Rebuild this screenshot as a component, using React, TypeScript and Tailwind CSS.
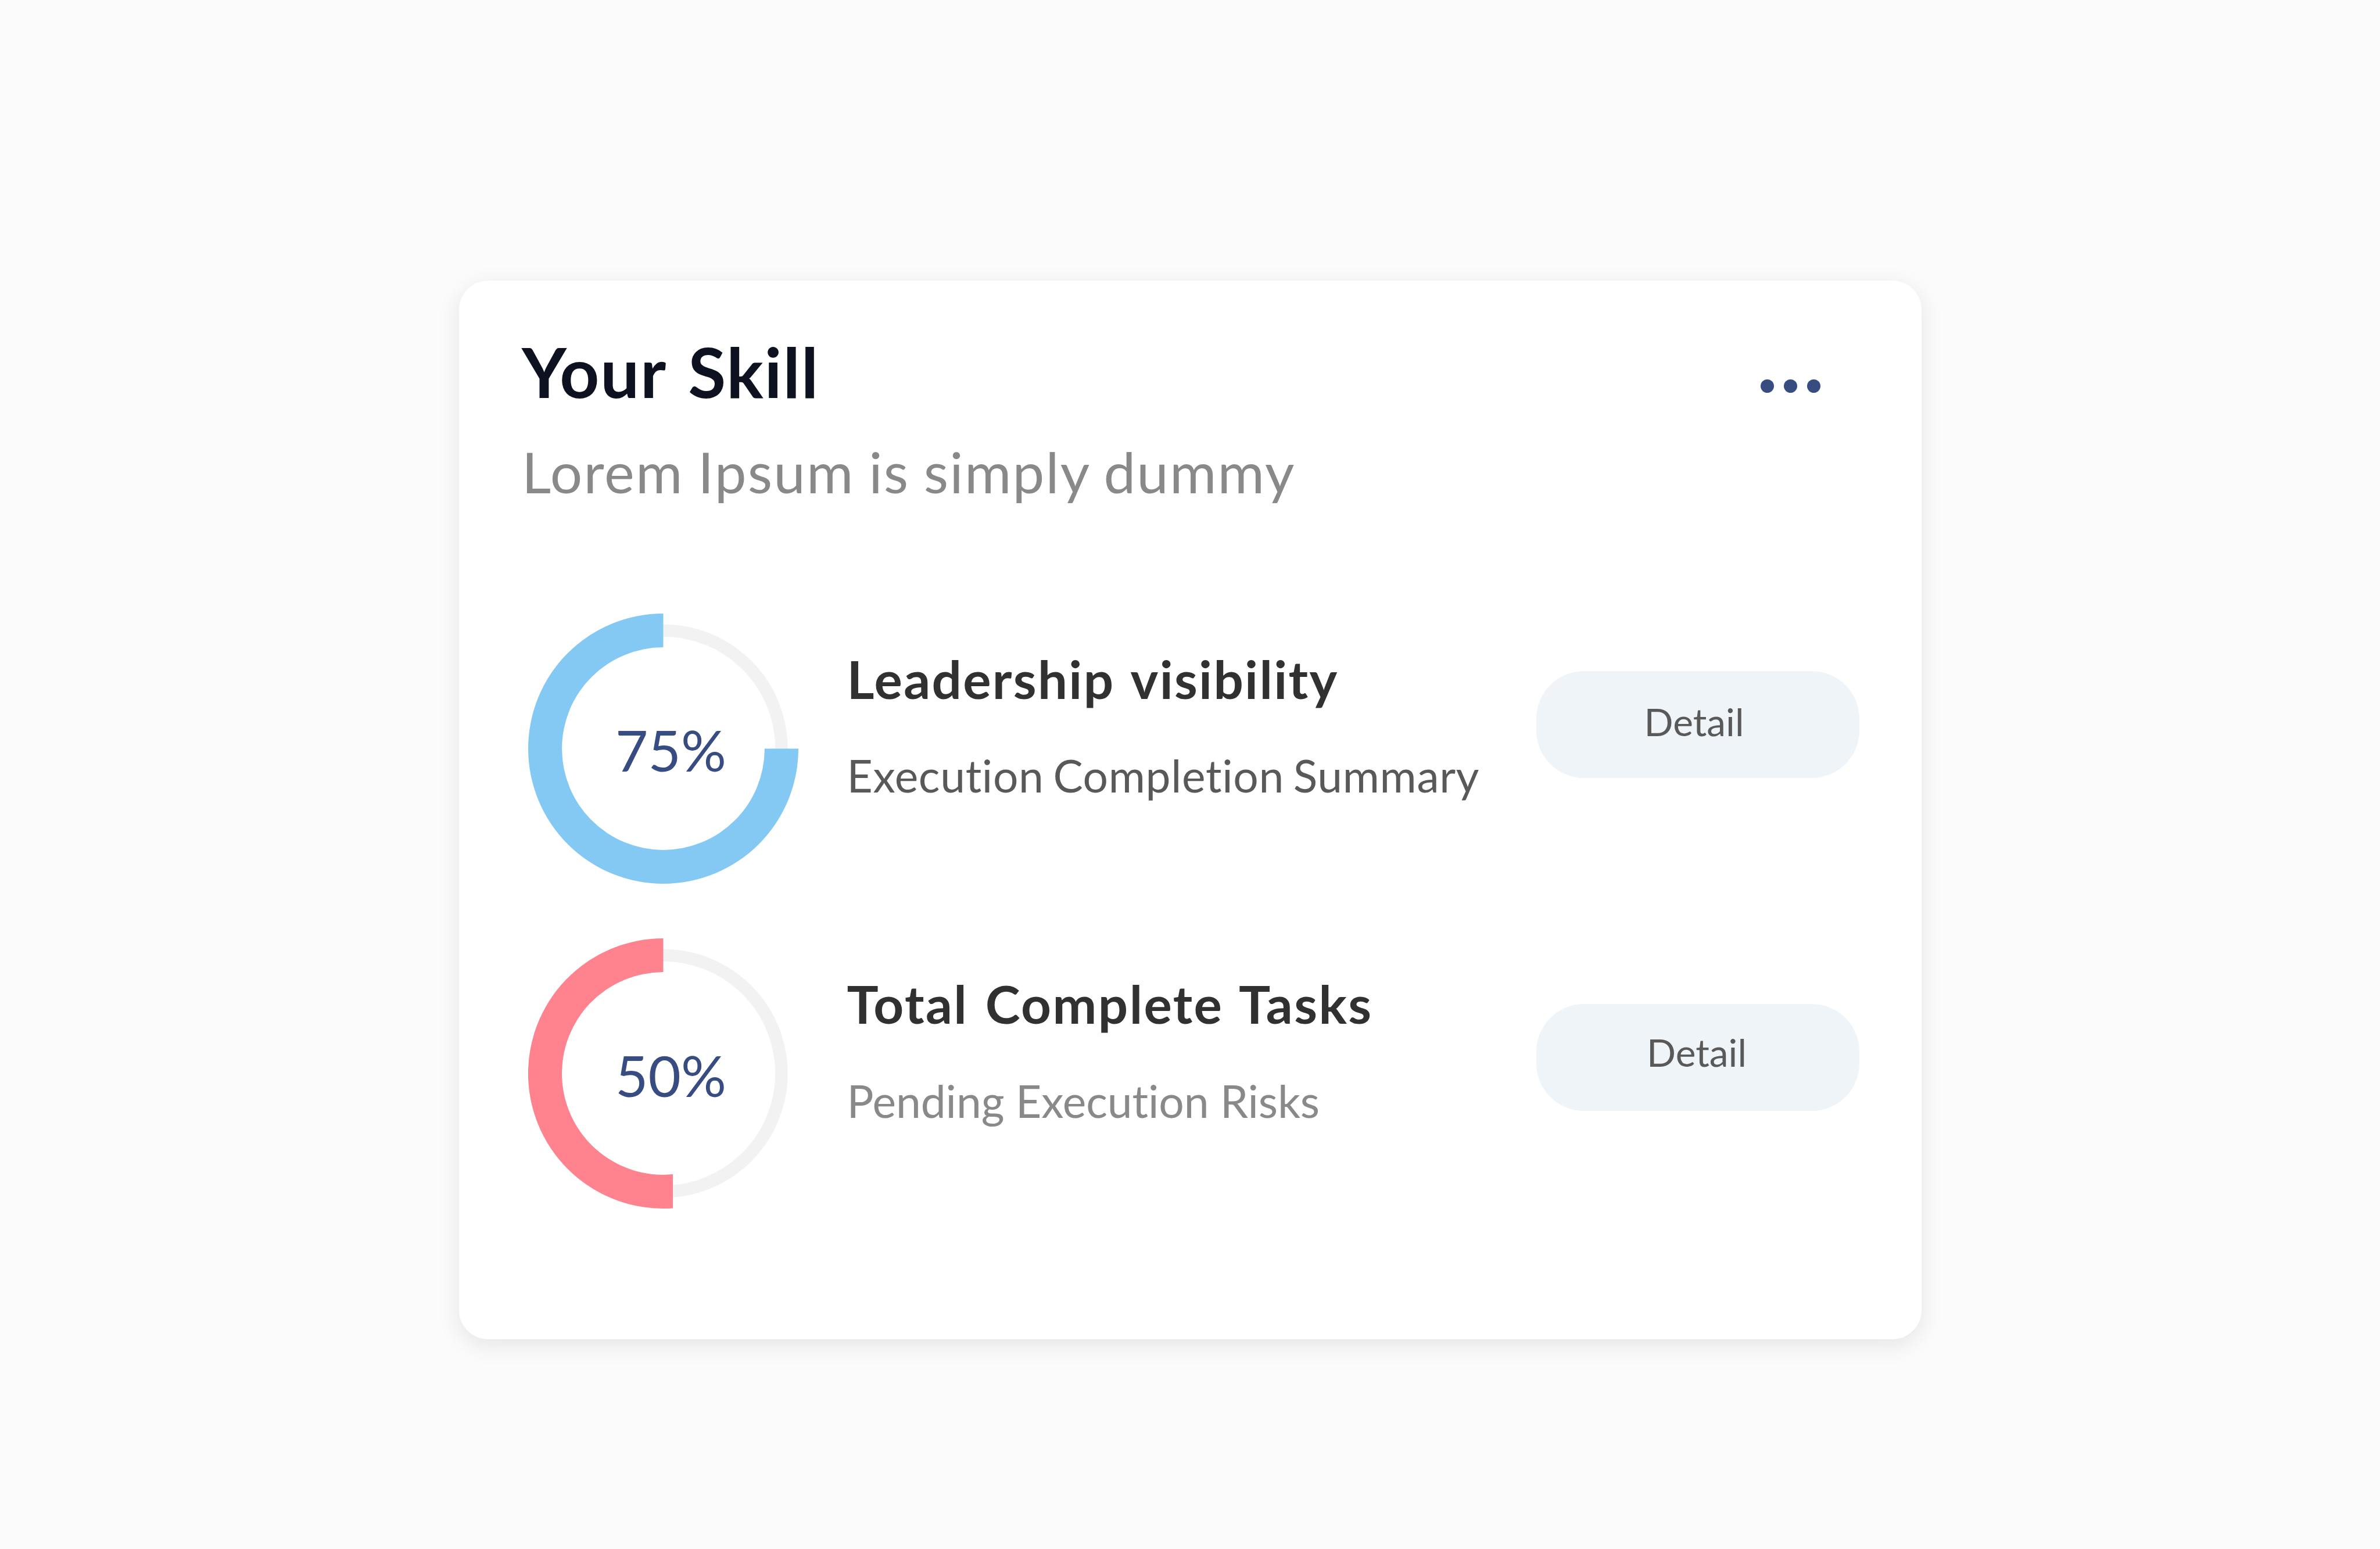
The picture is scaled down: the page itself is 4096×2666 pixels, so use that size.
type Skill = {
  title: string
  caption: string
  percent: number
  color: string
  // path of the progress arc, centred on 0,0
  arc: string
  titleClass: string
  captionClass: string
  buttonClass: string
  labelClass: string
}

const skills: Skill[] = [
  {
    title: "Leadership visibility",
    caption: "Execution Completion Summary",
    percent: 75,
    color: "#84c9f4",
    arc: "M0 -232.5A232.5 232.5 0 1 0 232.5 0H174.4A174.4 174.4 0 1 1 0 -174.4Z",
    titleClass: "tracking-[2.3px] [word-spacing:5px]",
    captionClass: "text-[#595959] tracking-[0.65px] [word-spacing:-4.5px]",
    buttonClass: "mt-[99px]",
    labelClass: "pt-[54px] pr-[12px]",
  },
  {
    title: "Total Complete Tasks",
    caption: "Pending Execution Risks",
    percent: 50,
    color: "#ff838e",
    arc: "M0 -232.5A232.5 232.5 0 1 0 16.6 231.9V173.6A174.4 174.4 0 1 1 0 -174.4Z",
    titleClass: "tracking-[2.4px] [word-spacing:5px]",
    captionClass: "text-[#898989] tracking-[-0.1px]",
    buttonClass: "mt-[113.4px]",
    labelClass: "pt-[50px] pr-[3px]",
  },
]

const SkillRing = ({ skill }: { skill: Skill }) => {
  return (
    <div className="relative size-[465px] shrink-0">
      <svg viewBox="-232.5 -232.5 465 465" className="block size-full">
        <circle r="203.4" fill="none" stroke="#f2f2f2" strokeWidth="21.4" />
        <path d={skill.arc} fill={skill.color} />
      </svg>
      <span className="absolute inset-x-0 top-[186.5px] pl-[27px] text-center text-[97.3px] leading-none text-[#374c80]">
        {skill.percent}%
      </span>
    </div>
  )
}

const SkillRow = ({ skill }: { skill: Skill }) => {
  return (
    <div className="flex items-start">
      <SkillRing skill={skill} />
      <div className="ml-[84px] flex flex-1 flex-col gap-[83.4px] pt-[67px] whitespace-nowrap">
        <h2 className={`text-[90.6px] leading-none font-bold text-[#313131] ${skill.titleClass}`}>
          {skill.title}
        </h2>
        <p className={`text-[76.8px] leading-none ${skill.captionClass}`}>{skill.caption}</p>
      </div>
      <button
        type="button"
        className={`flex h-[184px] w-[556px] shrink-0 items-start justify-center rounded-[82px] bg-[#eff4f8] text-[65.9px] leading-none text-[#595959] ${skill.buttonClass}`}
      >
        <span className={skill.labelClass}>Detail</span>
      </button>
    </div>
  )
}

const App = () => {
  return (
    <main className="flex h-[2666px] w-[4096px] items-start bg-[#fbfbfb] pt-[483px] pl-[790px] font-[Lato,sans-serif] [font-variant-ligatures:none]">
      <section className="h-[1822px] w-[2516.5px] rounded-[50px] bg-white pt-[97px] pr-[107px] shadow-[0_10px_40px_rgba(0,0,0,0.095)]">
        <header className="flex items-start justify-between pr-[67px] pl-[108px]">
          <div>
            <h1 className="text-[118.7px] leading-none font-bold tracking-[1.8px] text-[#0d1120] [word-spacing:8px]">
              Your Skill
            </h1>
            <p className="mt-[63.8px] text-[97.9px] leading-none tracking-[2.1px] text-[#898989] [word-spacing:-2.6px]">
              Lorem Ipsum is simply dummy
            </p>
          </div>
          <button type="button" aria-label="More" className="mt-[73px] flex gap-[16.6px]">
            <span className="size-[23px] rounded-full bg-[#374c80]" />
            <span className="size-[23px] rounded-full bg-[#374c80]" />
            <span className="size-[23px] rounded-full bg-[#374c80]" />
          </button>
        </header>

        <div className="mt-[195.1px] flex flex-col gap-[94.5px] pl-[118.5px]">
          {skills.map((skill) => (
            <SkillRow key={skill.title} skill={skill} />
          ))}
        </div>
      </section>
    </main>
  )
}

export default App
